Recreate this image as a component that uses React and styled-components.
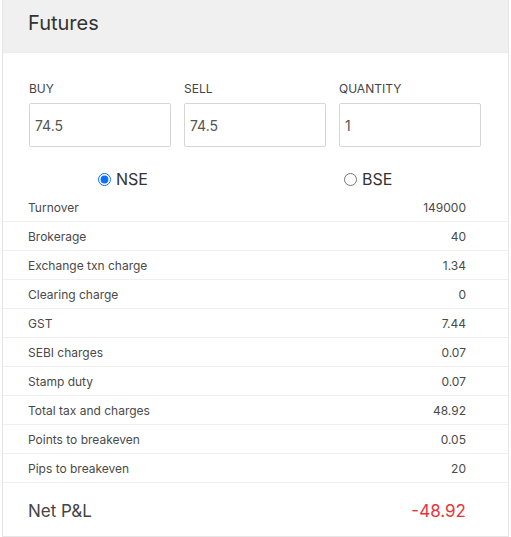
import React from 'react';
import styled, { createGlobalStyle } from 'styled-components';

const GlobalStyle = createGlobalStyle`
  body {
    margin: 0;
    background: #fff;
    font-family: Inter, "Noto Sans", sans-serif;
  }
`;

const Card = styled.div`
  margin: 0 2px;
  width: 505px;
  border: 1px solid #e6e6e6;
  border-top: none;
  background: #fff;
`;

const Header = styled.div`
  height: 53px;
  display: flex;
  align-items: center;
  padding: 0 0 7px 25px;
  box-sizing: border-box;
  background: #f0f0f0;
  border-bottom: 1px solid #ececec;
  font-size: 20px;
  color: #333;
`;

const Fields = styled.div`
  display: grid;
  grid-template-columns: repeat(3, 142px);
  column-gap: 13px;
  padding: 29px 26px 0;
`;

const Field = styled.label`
  display: flex;
  flex-direction: column;
`;

const FieldLabel = styled.span`
  font-size: 12px;
  line-height: 14px;
  color: #444;
  margin-bottom: 7px;
`;

const Input = styled.input`
  height: 44px;
  box-sizing: border-box;
  border: 1px solid #d6d6d6;
  border-radius: 2px;
  padding: 0 0 0 5px;
  font-family: inherit;
  font-size: 14px;
  color: #555;
  outline: none;
`;

const Exchanges = styled.div`
  display: flex;
  gap: 192px;
  padding: 21px 0 0 91px;
  height: 25px;
`;

const Option = styled.label`
  display: flex;
  align-items: center;
  gap: 3px;
  font-size: 16px;
  color: #333;
  height: 22px;
`;

const Radio = styled.input`
  width: 13px;
  height: 13px;
  margin: 0 2px 0 4px;
  accent-color: #0b6ff7;
`;

const Row = styled.div`
  display: flex;
  justify-content: space-between;
  align-items: center;
  height: 28px;
  padding: 0 42px 0 25px;
  border-bottom: 1px solid #efefef;
  font-size: 12px;
  color: #4a4a4a;
`;

const Total = styled.div`
  display: flex;
  justify-content: space-between;
  align-items: center;
  height: 53px;
  padding: 3px 42px 0 25px;
  box-sizing: border-box;
  font-size: 17px;
  color: #444;
`;

const Loss = styled.span`
  color: #e8353a;
`;

const rows = [
  ['Turnover', '149000'],
  ['Brokerage', '40'],
  ['Exchange txn charge', '1.34'],
  ['Clearing charge', '0'],
  ['GST', '7.44'],
  ['SEBI charges', '0.07'],
  ['Stamp duty', '0.07'],
  ['Total tax and charges', '48.92'],
  ['Points to breakeven', '0.05'],
  ['Pips to breakeven', '20'],
];

export default function App() {
  return (
    <>
      <GlobalStyle />
      <Card>
        <Header>Futures</Header>
        <Fields>
          <Field>
            <FieldLabel>BUY</FieldLabel>
            <Input defaultValue="74.5" />
          </Field>
          <Field>
            <FieldLabel>SELL</FieldLabel>
            <Input defaultValue="74.5" />
          </Field>
          <Field>
            <FieldLabel>QUANTITY</FieldLabel>
            <Input defaultValue="1" />
          </Field>
        </Fields>
        <Exchanges>
          <Option>
            <Radio type="radio" name="exchange" defaultChecked />
            NSE
          </Option>
          <Option>
            <Radio type="radio" name="exchange" />
            BSE
          </Option>
        </Exchanges>
        {rows.map(([label, value]) => (
          <Row key={label}>
            <span>{label}</span>
            <span>{value}</span>
          </Row>
        ))}
        <Total>
          <span>Net P&amp;L</span>
          <Loss>-48.92</Loss>
        </Total>
      </Card>
    </>
  );
}
